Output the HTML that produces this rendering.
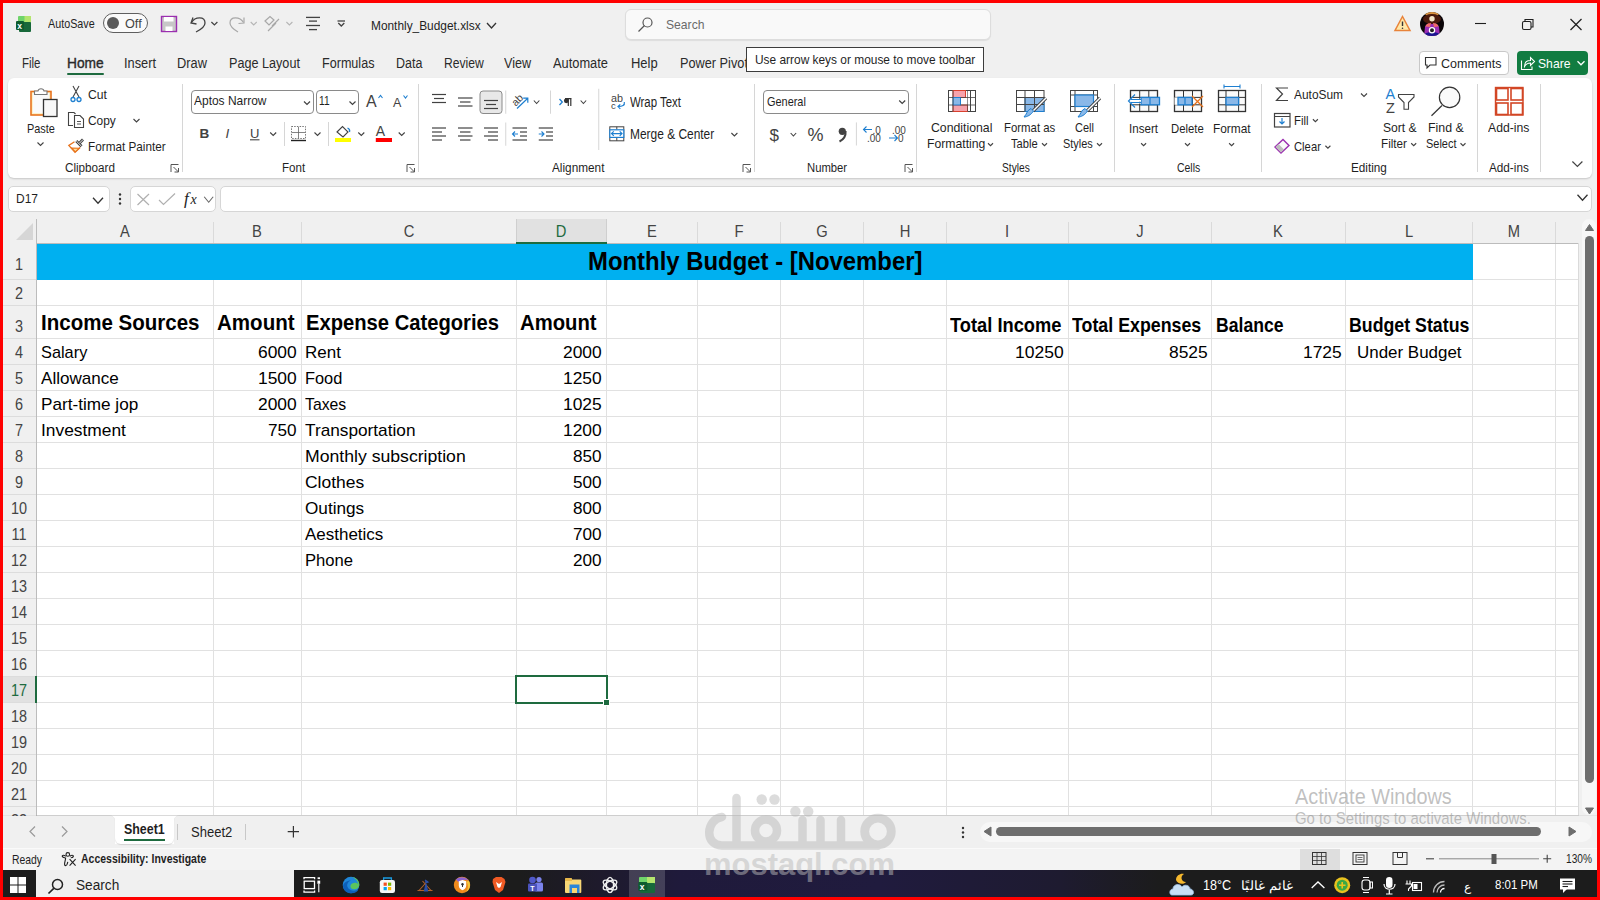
<!DOCTYPE html><html><head><meta charset="utf-8"><style>
*{margin:0;padding:0;box-sizing:border-box}
html,body{width:1600px;height:900px;overflow:hidden;background:#f0f0f0;font-family:"Liberation Sans",sans-serif}
.t{position:absolute;white-space:nowrap;line-height:1;transform-origin:0 0;z-index:11}
</style></head><body>
<div style="position:absolute;left:3px;top:219px;width:1575px;height:597px;background:#ffffff"></div>
<div style="position:absolute;left:3px;top:219px;width:1575px;height:24px;background:#f0f0f0"></div>
<div style="position:absolute;left:3px;top:243px;width:33px;height:573px;background:#f0f0f0"></div>
<svg style="position:absolute;left:16px;top:223px" width="17" height="17" viewBox="0 0 17 17" fill="none"><path d="M17 0 L17 17 L0 17 Z" fill="#d6d6d6"/></svg>
<div style="position:absolute;left:36px;top:244px;width:1437px;height:36px;background:#00b0f0"></div>
<div style="position:absolute;left:1473px;top:279px;width:105px;height:1px;background:#e1e1e1"></div>
<div style="position:absolute;left:3px;top:279px;width:33px;height:1px;background:#dcdcdc"></div>
<div style="position:absolute;left:36px;top:305px;width:1542px;height:1px;background:#e1e1e1"></div>
<div style="position:absolute;left:3px;top:305px;width:33px;height:1px;background:#dcdcdc"></div>
<div style="position:absolute;left:36px;top:338px;width:1542px;height:1px;background:#e1e1e1"></div>
<div style="position:absolute;left:3px;top:338px;width:33px;height:1px;background:#dcdcdc"></div>
<div style="position:absolute;left:36px;top:364px;width:1542px;height:1px;background:#e1e1e1"></div>
<div style="position:absolute;left:3px;top:364px;width:33px;height:1px;background:#dcdcdc"></div>
<div style="position:absolute;left:36px;top:390px;width:1542px;height:1px;background:#e1e1e1"></div>
<div style="position:absolute;left:3px;top:390px;width:33px;height:1px;background:#dcdcdc"></div>
<div style="position:absolute;left:36px;top:416px;width:1542px;height:1px;background:#e1e1e1"></div>
<div style="position:absolute;left:3px;top:416px;width:33px;height:1px;background:#dcdcdc"></div>
<div style="position:absolute;left:36px;top:442px;width:1542px;height:1px;background:#e1e1e1"></div>
<div style="position:absolute;left:3px;top:442px;width:33px;height:1px;background:#dcdcdc"></div>
<div style="position:absolute;left:36px;top:468px;width:1542px;height:1px;background:#e1e1e1"></div>
<div style="position:absolute;left:3px;top:468px;width:33px;height:1px;background:#dcdcdc"></div>
<div style="position:absolute;left:36px;top:494px;width:1542px;height:1px;background:#e1e1e1"></div>
<div style="position:absolute;left:3px;top:494px;width:33px;height:1px;background:#dcdcdc"></div>
<div style="position:absolute;left:36px;top:520px;width:1542px;height:1px;background:#e1e1e1"></div>
<div style="position:absolute;left:3px;top:520px;width:33px;height:1px;background:#dcdcdc"></div>
<div style="position:absolute;left:36px;top:546px;width:1542px;height:1px;background:#e1e1e1"></div>
<div style="position:absolute;left:3px;top:546px;width:33px;height:1px;background:#dcdcdc"></div>
<div style="position:absolute;left:36px;top:572px;width:1542px;height:1px;background:#e1e1e1"></div>
<div style="position:absolute;left:3px;top:572px;width:33px;height:1px;background:#dcdcdc"></div>
<div style="position:absolute;left:36px;top:598px;width:1542px;height:1px;background:#e1e1e1"></div>
<div style="position:absolute;left:3px;top:598px;width:33px;height:1px;background:#dcdcdc"></div>
<div style="position:absolute;left:36px;top:624px;width:1542px;height:1px;background:#e1e1e1"></div>
<div style="position:absolute;left:3px;top:624px;width:33px;height:1px;background:#dcdcdc"></div>
<div style="position:absolute;left:36px;top:650px;width:1542px;height:1px;background:#e1e1e1"></div>
<div style="position:absolute;left:3px;top:650px;width:33px;height:1px;background:#dcdcdc"></div>
<div style="position:absolute;left:36px;top:676px;width:1542px;height:1px;background:#e1e1e1"></div>
<div style="position:absolute;left:3px;top:676px;width:33px;height:1px;background:#dcdcdc"></div>
<div style="position:absolute;left:36px;top:702px;width:1542px;height:1px;background:#e1e1e1"></div>
<div style="position:absolute;left:3px;top:702px;width:33px;height:1px;background:#dcdcdc"></div>
<div style="position:absolute;left:36px;top:728px;width:1542px;height:1px;background:#e1e1e1"></div>
<div style="position:absolute;left:3px;top:728px;width:33px;height:1px;background:#dcdcdc"></div>
<div style="position:absolute;left:36px;top:754px;width:1542px;height:1px;background:#e1e1e1"></div>
<div style="position:absolute;left:3px;top:754px;width:33px;height:1px;background:#dcdcdc"></div>
<div style="position:absolute;left:36px;top:780px;width:1542px;height:1px;background:#e1e1e1"></div>
<div style="position:absolute;left:3px;top:780px;width:33px;height:1px;background:#dcdcdc"></div>
<div style="position:absolute;left:36px;top:806px;width:1542px;height:1px;background:#e1e1e1"></div>
<div style="position:absolute;left:3px;top:806px;width:33px;height:1px;background:#dcdcdc"></div>
<div style="position:absolute;left:213px;top:280px;width:1px;height:536px;background:#e1e1e1"></div>
<div style="position:absolute;left:213px;top:222px;width:1px;height:21px;background:#dadada"></div>
<div style="position:absolute;left:301px;top:280px;width:1px;height:536px;background:#e1e1e1"></div>
<div style="position:absolute;left:301px;top:222px;width:1px;height:21px;background:#dadada"></div>
<div style="position:absolute;left:516px;top:280px;width:1px;height:536px;background:#e1e1e1"></div>
<div style="position:absolute;left:516px;top:222px;width:1px;height:21px;background:#dadada"></div>
<div style="position:absolute;left:606px;top:280px;width:1px;height:536px;background:#e1e1e1"></div>
<div style="position:absolute;left:606px;top:222px;width:1px;height:21px;background:#dadada"></div>
<div style="position:absolute;left:697px;top:280px;width:1px;height:536px;background:#e1e1e1"></div>
<div style="position:absolute;left:697px;top:222px;width:1px;height:21px;background:#dadada"></div>
<div style="position:absolute;left:780px;top:280px;width:1px;height:536px;background:#e1e1e1"></div>
<div style="position:absolute;left:780px;top:222px;width:1px;height:21px;background:#dadada"></div>
<div style="position:absolute;left:863px;top:280px;width:1px;height:536px;background:#e1e1e1"></div>
<div style="position:absolute;left:863px;top:222px;width:1px;height:21px;background:#dadada"></div>
<div style="position:absolute;left:946px;top:280px;width:1px;height:536px;background:#e1e1e1"></div>
<div style="position:absolute;left:946px;top:222px;width:1px;height:21px;background:#dadada"></div>
<div style="position:absolute;left:1068px;top:280px;width:1px;height:536px;background:#e1e1e1"></div>
<div style="position:absolute;left:1068px;top:222px;width:1px;height:21px;background:#dadada"></div>
<div style="position:absolute;left:1211px;top:280px;width:1px;height:536px;background:#e1e1e1"></div>
<div style="position:absolute;left:1211px;top:222px;width:1px;height:21px;background:#dadada"></div>
<div style="position:absolute;left:1345px;top:280px;width:1px;height:536px;background:#e1e1e1"></div>
<div style="position:absolute;left:1345px;top:222px;width:1px;height:21px;background:#dadada"></div>
<div style="position:absolute;left:1472px;top:280px;width:1px;height:536px;background:#e1e1e1"></div>
<div style="position:absolute;left:1472px;top:222px;width:1px;height:21px;background:#dadada"></div>
<div style="position:absolute;left:1555px;top:244px;width:1px;height:572px;background:#e1e1e1"></div>
<div style="position:absolute;left:1555px;top:222px;width:1px;height:21px;background:#dadada"></div>
<div style="position:absolute;left:1578px;top:243px;width:1px;height:573px;background:#dadada"></div>
<div style="position:absolute;left:36px;top:815px;width:1543px;height:1px;background:#dadada"></div>
<div style="position:absolute;left:36px;top:243px;width:1542px;height:1px;background:#bcbcbc"></div>
<div style="position:absolute;left:36px;top:219px;width:1px;height:597px;background:#bcbcbc"></div>
<div style="position:absolute;left:516px;top:219px;width:91px;height:24px;background:#e1e1e1;border-left:1px solid #cfcfcf;border-right:1px solid #cfcfcf"></div>
<div style="position:absolute;left:516px;top:242px;width:91px;height:2px;background:#1e6b3f"></div>
<div style="position:absolute;left:3px;top:677px;width:33px;height:25px;background:#e1e1e1"></div>
<div style="position:absolute;left:35px;top:676px;width:2px;height:27px;background:#1e6b3f"></div>
<div class="t" style="left:84.5px;width:80px;text-align:center;top:223.66px;font-size:16px;color:#444444;transform:scaleX(0.92);transform-origin:50% 0">A</div>
<div class="t" style="left:217.0px;width:80px;text-align:center;top:223.66px;font-size:16px;color:#444444;transform:scaleX(0.92);transform-origin:50% 0">B</div>
<div class="t" style="left:368.5px;width:80px;text-align:center;top:223.66px;font-size:16px;color:#444444;transform:scaleX(0.92);transform-origin:50% 0">C</div>
<div class="t" style="left:521.0px;width:80px;text-align:center;top:223.66px;font-size:16px;color:#1e6b3f;transform:scaleX(0.92);transform-origin:50% 0">D</div>
<div class="t" style="left:611.5px;width:80px;text-align:center;top:223.66px;font-size:16px;color:#444444;transform:scaleX(0.92);transform-origin:50% 0">E</div>
<div class="t" style="left:698.5px;width:80px;text-align:center;top:223.66px;font-size:16px;color:#444444;transform:scaleX(0.92);transform-origin:50% 0">F</div>
<div class="t" style="left:781.5px;width:80px;text-align:center;top:223.66px;font-size:16px;color:#444444;transform:scaleX(0.92);transform-origin:50% 0">G</div>
<div class="t" style="left:864.5px;width:80px;text-align:center;top:223.66px;font-size:16px;color:#444444;transform:scaleX(0.92);transform-origin:50% 0">H</div>
<div class="t" style="left:967.0px;width:80px;text-align:center;top:223.66px;font-size:16px;color:#444444;transform:scaleX(0.92);transform-origin:50% 0">I</div>
<div class="t" style="left:1099.5px;width:80px;text-align:center;top:223.66px;font-size:16px;color:#444444;transform:scaleX(0.92);transform-origin:50% 0">J</div>
<div class="t" style="left:1238.0px;width:80px;text-align:center;top:223.66px;font-size:16px;color:#444444;transform:scaleX(0.92);transform-origin:50% 0">K</div>
<div class="t" style="left:1368.5px;width:80px;text-align:center;top:223.66px;font-size:16px;color:#444444;transform:scaleX(0.92);transform-origin:50% 0">L</div>
<div class="t" style="left:1473.5px;width:80px;text-align:center;top:223.66px;font-size:16px;color:#444444;transform:scaleX(0.92);transform-origin:50% 0">M</div>
<div class="t" style="left:1.5px;width:34px;text-align:center;top:256.44px;font-size:17.2px;color:#444444;transform:scaleX(0.84);transform-origin:50% 0">1</div>
<div class="t" style="left:1.5px;width:34px;text-align:center;top:284.84px;font-size:17.2px;color:#444444;transform:scaleX(0.84);transform-origin:50% 0">2</div>
<div class="t" style="left:1.5px;width:34px;text-align:center;top:317.84px;font-size:17.2px;color:#444444;transform:scaleX(0.84);transform-origin:50% 0">3</div>
<div class="t" style="left:1.5px;width:34px;text-align:center;top:343.84px;font-size:17.2px;color:#444444;transform:scaleX(0.84);transform-origin:50% 0">4</div>
<div class="t" style="left:1.5px;width:34px;text-align:center;top:369.84px;font-size:17.2px;color:#444444;transform:scaleX(0.84);transform-origin:50% 0">5</div>
<div class="t" style="left:1.5px;width:34px;text-align:center;top:395.84px;font-size:17.2px;color:#444444;transform:scaleX(0.84);transform-origin:50% 0">6</div>
<div class="t" style="left:1.5px;width:34px;text-align:center;top:421.84px;font-size:17.2px;color:#444444;transform:scaleX(0.84);transform-origin:50% 0">7</div>
<div class="t" style="left:1.5px;width:34px;text-align:center;top:447.84px;font-size:17.2px;color:#444444;transform:scaleX(0.84);transform-origin:50% 0">8</div>
<div class="t" style="left:1.5px;width:34px;text-align:center;top:473.84px;font-size:17.2px;color:#444444;transform:scaleX(0.84);transform-origin:50% 0">9</div>
<div class="t" style="left:1.5px;width:34px;text-align:center;top:499.84px;font-size:17.2px;color:#444444;transform:scaleX(0.84);transform-origin:50% 0">10</div>
<div class="t" style="left:1.5px;width:34px;text-align:center;top:525.84px;font-size:17.2px;color:#444444;transform:scaleX(0.84);transform-origin:50% 0">11</div>
<div class="t" style="left:1.5px;width:34px;text-align:center;top:551.84px;font-size:17.2px;color:#444444;transform:scaleX(0.84);transform-origin:50% 0">12</div>
<div class="t" style="left:1.5px;width:34px;text-align:center;top:577.84px;font-size:17.2px;color:#444444;transform:scaleX(0.84);transform-origin:50% 0">13</div>
<div class="t" style="left:1.5px;width:34px;text-align:center;top:603.84px;font-size:17.2px;color:#444444;transform:scaleX(0.84);transform-origin:50% 0">14</div>
<div class="t" style="left:1.5px;width:34px;text-align:center;top:629.84px;font-size:17.2px;color:#444444;transform:scaleX(0.84);transform-origin:50% 0">15</div>
<div class="t" style="left:1.5px;width:34px;text-align:center;top:655.84px;font-size:17.2px;color:#444444;transform:scaleX(0.84);transform-origin:50% 0">16</div>
<div class="t" style="left:1.5px;width:34px;text-align:center;top:681.84px;font-size:17.2px;color:#1e6b3f;transform:scaleX(0.84);transform-origin:50% 0">17</div>
<div class="t" style="left:1.5px;width:34px;text-align:center;top:707.84px;font-size:17.2px;color:#444444;transform:scaleX(0.84);transform-origin:50% 0">18</div>
<div class="t" style="left:1.5px;width:34px;text-align:center;top:733.84px;font-size:17.2px;color:#444444;transform:scaleX(0.84);transform-origin:50% 0">19</div>
<div class="t" style="left:1.5px;width:34px;text-align:center;top:759.84px;font-size:17.2px;color:#444444;transform:scaleX(0.84);transform-origin:50% 0">20</div>
<div class="t" style="left:1.5px;width:34px;text-align:center;top:785.84px;font-size:17.2px;color:#444444;transform:scaleX(0.84);transform-origin:50% 0">21</div>
<div style="position:absolute;left:0;top:806px;width:36px;height:10px;overflow:hidden;z-index:11"><div class="t" style="left:1.5px;width:34px;text-align:center;top:5.84px;font-size:17.2px;color:#444444;transform:scaleX(0.84);transform-origin:50% 0">22</div></div>
<div style="position:absolute;left:515px;top:675px;width:93px;height:29px;border:2px solid #1e6b3f;background:transparent"></div>
<div style="position:absolute;left:603px;top:699px;width:7px;height:7px;background:#1e6b3f;border:1px solid #fff"></div>
<div class="t" style="left:587.50px;top:249.16px;font-size:25.80px;color:#000;transform:scaleX(0.9262); font-weight:bold;">Monthly Budget - [November]</div>
<div class="t" style="left:41.00px;top:312.11px;font-size:22.32px;color:#000;transform:scaleX(0.9193); font-weight:bold;">Income Sources</div>
<div class="t" style="left:216.70px;top:312.11px;font-size:22.32px;color:#000;transform:scaleX(0.9210); font-weight:bold;">Amount</div>
<div class="t" style="left:305.60px;top:312.11px;font-size:22.32px;color:#000;transform:scaleX(0.9050); font-weight:bold;">Expense Categories</div>
<div class="t" style="left:520.40px;top:312.11px;font-size:22.32px;color:#000;transform:scaleX(0.9080); font-weight:bold;">Amount</div>
<div class="t" style="left:950.00px;top:313.61px;font-size:21.01px;color:#000;transform:scaleX(0.8712); font-weight:bold;">Total Income</div>
<div class="t" style="left:1072.30px;top:313.61px;font-size:21.01px;color:#000;transform:scaleX(0.8475); font-weight:bold;">Total Expenses</div>
<div class="t" style="left:1216.00px;top:313.61px;font-size:21.01px;color:#000;transform:scaleX(0.8377); font-weight:bold;">Balance</div>
<div class="t" style="left:1349.40px;top:313.61px;font-size:21.01px;color:#000;transform:scaleX(0.8457); font-weight:bold;">Budget Status</div>
<div class="t" style="left:40.60px;top:343.89px;font-size:16.38px;color:#000;transform:scaleX(0.9990);">Salary</div>
<div class="t" style="left:40.60px;top:369.89px;font-size:16.38px;color:#000;transform:scaleX(1.0431);">Allowance</div>
<div class="t" style="left:40.60px;top:395.89px;font-size:16.38px;color:#000;transform:scaleX(1.0489);">Part-time jop</div>
<div class="t" style="left:40.60px;top:421.89px;font-size:16.38px;color:#000;transform:scaleX(1.0614);">Investment</div>
<div class="t" style="left:258.30px;top:343.89px;font-size:16.38px;color:#000;transform:scaleX(1.0645);">6000</div>
<div class="t" style="left:258.30px;top:369.89px;font-size:16.38px;color:#000;transform:scaleX(1.0645);">1500</div>
<div class="t" style="left:258.30px;top:395.89px;font-size:16.38px;color:#000;transform:scaleX(1.0645);">2000</div>
<div class="t" style="left:268.35px;top:421.89px;font-size:16.38px;color:#000;transform:scaleX(1.0476);">750</div>
<div class="t" style="left:304.90px;top:343.89px;font-size:16.38px;color:#000;transform:scaleX(1.0389);">Rent</div>
<div class="t" style="left:304.90px;top:369.89px;font-size:16.38px;color:#000;transform:scaleX(1.0016);">Food</div>
<div class="t" style="left:304.90px;top:395.89px;font-size:16.38px;color:#000;transform:scaleX(0.9639);">Taxes</div>
<div class="t" style="left:304.90px;top:421.89px;font-size:16.38px;color:#000;transform:scaleX(1.0536);">Transportation</div>
<div class="t" style="left:304.90px;top:447.89px;font-size:16.38px;color:#000;transform:scaleX(1.0778);">Monthly subscription</div>
<div class="t" style="left:304.90px;top:473.89px;font-size:16.38px;color:#000;transform:scaleX(1.0681);">Clothes</div>
<div class="t" style="left:304.90px;top:499.89px;font-size:16.38px;color:#000;transform:scaleX(1.0496);">Outings</div>
<div class="t" style="left:304.90px;top:525.89px;font-size:16.38px;color:#000;transform:scaleX(1.0371);">Aesthetics</div>
<div class="t" style="left:304.90px;top:551.89px;font-size:16.38px;color:#000;transform:scaleX(1.0163);">Phone</div>
<div class="t" style="left:563.30px;top:343.89px;font-size:16.38px;color:#000;transform:scaleX(1.0645);">2000</div>
<div class="t" style="left:563.30px;top:369.89px;font-size:16.38px;color:#000;transform:scaleX(1.0645);">1250</div>
<div class="t" style="left:563.30px;top:395.89px;font-size:16.38px;color:#000;transform:scaleX(1.0645);">1025</div>
<div class="t" style="left:563.30px;top:421.89px;font-size:16.38px;color:#000;transform:scaleX(1.0645);">1200</div>
<div class="t" style="left:573.35px;top:447.89px;font-size:16.38px;color:#000;transform:scaleX(1.0476);">850</div>
<div class="t" style="left:573.35px;top:473.89px;font-size:16.38px;color:#000;transform:scaleX(1.0476);">500</div>
<div class="t" style="left:573.35px;top:499.89px;font-size:16.38px;color:#000;transform:scaleX(1.0476);">800</div>
<div class="t" style="left:573.35px;top:525.89px;font-size:16.38px;color:#000;transform:scaleX(1.0476);">700</div>
<div class="t" style="left:573.35px;top:551.89px;font-size:16.38px;color:#000;transform:scaleX(1.0476);">200</div>
<div class="t" style="left:1015.45px;top:344.14px;font-size:16.38px;color:#000;transform:scaleX(1.0708);">10250</div>
<div class="t" style="left:1168.90px;top:344.14px;font-size:16.38px;color:#000;transform:scaleX(1.0645);">8525</div>
<div class="t" style="left:1302.90px;top:344.14px;font-size:16.38px;color:#000;transform:scaleX(1.0645);">1725</div>
<div class="t" style="left:1356.80px;top:344.14px;font-size:16.38px;color:#000;transform:scaleX(1.0352);">Under Budget</div>
<div class="t" style="left:48.25px;top:18.28px;font-size:12.90px;color:#1f1f1f;transform:scaleX(0.8351);">AutoSave</div>
<div style="position:absolute;left:103px;top:13px;width:45px;height:20px;border:1px solid #5f5f5f;border-radius:10px;background:#fafafa"></div>
<div style="position:absolute;left:107px;top:17px;width:12px;height:12px;border-radius:6px;background:#5a5a5a"></div>
<div class="t" style="left:125.00px;top:18.28px;font-size:12.90px;color:#444;transform:scaleX(0.9838);">Off</div>
<div class="t" style="left:371.25px;top:18.76px;font-size:13.04px;color:#1f1f1f;transform:scaleX(0.9116);">Monthly_Budget.xlsx</div>
<svg style="position:absolute;left:486.0px;top:21.5px" width="11" height="7" viewBox="0 0 11 7" fill="none"><path d="M1 1 L5.5 6 L10 1" stroke="#333" stroke-width="1.3" fill="none"/></svg>
<div style="position:absolute;left:625px;top:9px;width:366px;height:31px;background:#f9f9f9;border:1px solid #dddddd;border-radius:6px;box-shadow:0 1px 1px rgba(0,0,0,0.08)"></div>
<div class="t" style="left:666.00px;top:18.39px;font-size:13.48px;color:#6a6a6a;transform:scaleX(0.9011);">Search</div>
<div class="t" style="left:22.00px;top:57.02px;font-size:13.91px;color:#2a2a2a;transform:scaleX(0.8259);">File</div>
<div class="t" style="left:67.00px;top:57.02px;font-size:13.91px;color:#2a2a2a;transform:scaleX(0.9893);-webkit-text-stroke:0.35px #2a2a2a;">Home</div>
<div class="t" style="left:124.00px;top:57.02px;font-size:13.91px;color:#2a2a2a;transform:scaleX(0.9200);">Insert</div>
<div class="t" style="left:177.00px;top:57.02px;font-size:13.91px;color:#2a2a2a;transform:scaleX(0.9215);">Draw</div>
<div class="t" style="left:229.00px;top:57.02px;font-size:13.91px;color:#2a2a2a;transform:scaleX(0.9080);">Page Layout</div>
<div class="t" style="left:322.00px;top:57.02px;font-size:13.91px;color:#2a2a2a;transform:scaleX(0.9049);">Formulas</div>
<div class="t" style="left:396.00px;top:57.02px;font-size:13.91px;color:#2a2a2a;transform:scaleX(0.8984);">Data</div>
<div class="t" style="left:444.00px;top:57.02px;font-size:13.91px;color:#2a2a2a;transform:scaleX(0.8739);">Review</div>
<div class="t" style="left:503.75px;top:57.02px;font-size:13.91px;color:#2a2a2a;transform:scaleX(0.9068);">View</div>
<div class="t" style="left:553.00px;top:57.02px;font-size:13.91px;color:#2a2a2a;transform:scaleX(0.9236);">Automate</div>
<div class="t" style="left:630.75px;top:57.02px;font-size:13.91px;color:#2a2a2a;transform:scaleX(0.9333);">Help</div>
<div class="t" style="left:680.00px;top:57.02px;font-size:13.91px;color:#2a2a2a;transform:scaleX(0.9153);">Power Pivot</div>
<div style="position:absolute;left:67px;top:73px;width:37px;height:2px;background:#1e6b3f;border-radius:1px"></div>
<div style="position:absolute;left:746px;top:47px;width:238px;height:25px;background:#ffffff;border:1px solid #3c3c3c;z-index:12"></div>
<div class="t" style="left:754.50px;top:53.09px;font-size:13.48px;color:#1f1f1f;transform:scaleX(0.8838);z-index:13;">Use arrow keys or mouse to move toolbar</div>
<div style="position:absolute;left:1419px;top:51px;width:90px;height:24px;background:#fff;border:1px solid #c8c8c8;border-radius:4px"></div>
<div class="t" style="left:1440.50px;top:56.59px;font-size:13.48px;color:#1f1f1f;transform:scaleX(0.9293);">Comments</div>
<div style="position:absolute;left:1517px;top:51px;width:71px;height:24px;background:#117c41;border-radius:4px"></div>
<div class="t" style="left:1538.00px;top:56.59px;font-size:13.48px;color:#ffffff;transform:scaleX(0.9031);">Share</div>
<div style="position:absolute;left:8px;top:78px;width:1584px;height:100px;background:#ffffff;border-radius:6px;box-shadow:0 1px 2px rgba(0,0,0,0.18)"></div>
<div style="position:absolute;left:8px;top:186px;width:102px;height:26px;background:#fff;border:1px solid #d6d6d6;border-radius:5px"></div>
<div class="t" style="left:15.50px;top:192.34px;font-size:13.48px;color:#1f1f1f;transform:scaleX(0.8919);">D17</div>
<div style="position:absolute;left:130px;top:186px;width:86px;height:26px;background:#fff;border:1px solid #d6d6d6;border-radius:5px"></div>
<div style="position:absolute;left:220px;top:186px;width:1372px;height:26px;background:#fff;border:1px solid #d6d6d6;border-radius:5px"></div>
<div style="position:absolute;left:3px;top:816px;width:1594px;height:32px;background:#ffffff"></div>
<div style="position:absolute;left:3px;top:816px;width:112px;height:32px;background:#f0f0f0;border-radius:0 5px 0 0;box-shadow:0 -0.5px 0.5px rgba(0,0,0,0.10)"></div>
<div style="position:absolute;left:174px;top:816px;width:1423px;height:32px;background:#f0f0f0;border-radius:5px 0 0 0;box-shadow:0 -0.5px 0.5px rgba(0,0,0,0.10)"></div>
<div style="position:absolute;left:115px;top:844px;width:59px;height:4px;background:#f0f0f0"></div>
<div style="position:absolute;left:115px;top:816px;width:59px;height:28px;background:#ffffff;border-radius:0 0 6px 6px;box-shadow:0 1px 1px rgba(0,0,0,0.12)"></div>
<div class="t" style="left:124.25px;top:821.86px;font-size:14.93px;color:#1f1f1f;transform:scaleX(0.8323); font-weight:bold;">Sheet1</div>
<div style="position:absolute;left:124px;top:839px;width:41px;height:2px;background:#1e6b3f"></div>
<div style="position:absolute;left:177px;top:824px;width:1px;height:16px;background:#c8c8c8"></div>
<div class="t" style="left:190.50px;top:824.86px;font-size:14.93px;color:#1f1f1f;transform:scaleX(0.8717);">Sheet2</div>
<div style="position:absolute;left:245px;top:824px;width:1px;height:16px;background:#c8c8c8"></div>
<div style="position:absolute;left:3px;top:848px;width:1594px;height:22px;background:#f3f3f3;border-top:1px solid #fafafa"></div>
<div class="t" style="left:11.75px;top:853.82px;font-size:12.32px;color:#1f1f1f;transform:scaleX(0.8427);">Ready</div>
<div class="t" style="left:80.50px;top:852.58px;font-size:12.61px;color:#1f1f1f;transform:scaleX(0.8313); font-weight:bold;">Accessibility: Investigate</div>
<div class="t" style="left:1566.00px;top:852.89px;font-size:12.17px;color:#1f1f1f;transform:scaleX(0.8343);">130%</div>
<div style="position:absolute;left:1300px;top:849px;width:40px;height:21px;background:#dedede"></div>
<div style="position:absolute;left:980px;top:822px;width:612px;height:20px;background:#f7f7f7;border-radius:10px"></div>
<div style="position:absolute;left:996px;top:827px;width:545px;height:9px;background:#6e6e6e;border-radius:5px"></div>
<div style="position:absolute;left:1582px;top:219px;width:14px;height:596px;background:#f7f7f7;border-radius:7px"></div>
<div style="position:absolute;left:1585px;top:236px;width:9px;height:547px;background:#6e6e6e;border-radius:5px"></div>
<div style="position:absolute;left:0px;top:870px;width:1600px;height:30px;background:linear-gradient(90deg,#1c1c1c 0px,#1c1c1c 520px,#1e1a2c 600px,#1f1a3b 680px,#201b3e 880px,#1e1b30 1060px,#1c1c1c 1160px,#1c1c1c 1600px)"></div>
<div style="position:absolute;left:36px;top:870px;width:258px;height:27px;background:#f0f0f0"></div>
<div class="t" style="left:76.25px;top:878.18px;font-size:14.86px;color:#1f1f1f;transform:scaleX(0.9184);">Search</div>
<div style="position:absolute;left:629px;top:870px;width:36px;height:27px;background:rgba(255,255,255,0.17)"></div>
<div class="t" style="left:1203.40px;top:877.89px;font-size:14.78px;color:#ffffff;transform:scaleX(0.8524);">18°C</div>
<div class="t" style="left:1494.50px;top:878.09px;font-size:13.48px;color:#ffffff;transform:scaleX(0.8516);">8:01 PM</div>
<svg style="position:absolute;left:0;top:0;z-index:10" width="1600" height="900" viewBox="0 0 1600 900"><rect x="18" y="16" width="13" height="7" rx="1" fill="#6fd46b"/><rect x="24.5" y="16" width="6.5" height="6" fill="#b4e56e"/><rect x="19" y="22" width="12" height="10" rx="1" fill="#17683a"/><rect x="16" y="21" width="8" height="9" rx="1" fill="#0e5c2f"/><text x="17.3" y="28.6" font-family="Liberation Sans" font-size="8.5" fill="#ffffff" font-weight="bold" text-anchor="start" >x</text><rect x="161.5" y="16.5" width="15" height="15" rx="0" stroke="#9b2fb0" stroke-width="1.4" fill="#c7c7c7"/><rect x="164" y="17" width="9.5" height="4.5" rx="0" stroke="none" stroke-width="0" fill="#ffffff"/><rect x="165.5" y="26.5" width="7" height="4.5" rx="0" stroke="none" stroke-width="0" fill="#ffffff"/><path d="M193 17.5 L191 23 L196.5 24" stroke="#424242" stroke-width="1.3" fill="none" /><path d="M191.5 22.5 C195 16.5 205 16 205 23 C205 26 202 29 196 32" stroke="#424242" stroke-width="1.3" fill="none" /><path d="M211.4 22.0 L214.4 25.0 L217.4 22.0" stroke="#424242" stroke-width="1.2" fill="none"/><path d="M244 17.5 L244 23 L238.5 23.5" stroke="#a8a8a8" stroke-width="1.2" fill="none" /><path d="M243.5 22.5 C240 16.5 230 16 230 23 C230 26 233 29 238 32" stroke="#a8a8a8" stroke-width="1.2" fill="none" /><path d="M250.7 22.0 L253.7 25.0 L256.7 22.0" stroke="#b5b5b5" stroke-width="1.1" fill="none"/><path d="M265 21 L270 16.5 L274 20 L269 25 Z" stroke="#a8a8a8" stroke-width="1.2" fill="none" /><path d="M272 26 L279 19 M268 31 L276 23" stroke="#a8a8a8" stroke-width="1.2" fill="none" /><path d="M286.4 22.0 L289.4 25.0 L292.4 22.0" stroke="#b5b5b5" stroke-width="1.1" fill="none"/><line x1="306" y1="17.4" x2="320" y2="17.4" stroke="#424242" stroke-width="1.3"/><line x1="309" y1="21.1" x2="317" y2="21.1" stroke="#424242" stroke-width="1.3"/><line x1="306" y1="25.5" x2="320" y2="25.5" stroke="#424242" stroke-width="1.3"/><line x1="309" y1="29.6" x2="317" y2="29.6" stroke="#424242" stroke-width="1.3"/><line x1="337.5" y1="21" x2="345" y2="21" stroke="#424242" stroke-width="1.3"/><path d="M338.3 23.0 L341.3 26.0 L344.3 23.0" stroke="#424242" stroke-width="1.3" fill="none"/><circle cx="647.5" cy="22.5" r="4.5" stroke="#555" stroke-width="1.2" fill="none"/><line x1="644.5" y1="25.5" x2="638.5" y2="31.5" stroke="#555" stroke-width="1.3"/><path d="M1402.5 16.5 L1410 30.5 L1395 30.5 Z" stroke="#e8833a" stroke-width="1.5" fill="#ffe8a8" /><line x1="1402.5" y1="21.5" x2="1402.5" y2="26" stroke="#333" stroke-width="1.4"/><circle cx="1402.5" cy="28.2" r="0.8" fill="#333"/><defs><clipPath id="av"><circle cx="1432" cy="24" r="12"/></clipPath></defs><g clip-path="url(#av)"><rect x="1420" y="12" width="24" height="24" fill="#0a0508"/><ellipse cx="1432" cy="13.5" rx="7" ry="3.5" fill="#d9923e"/><ellipse cx="1432" cy="19" rx="9" ry="5" fill="#4a1a0c"/><path d="M1425 27 C1425 23 1439 23 1439 27 L1440 36 L1424 36 Z" fill="#9a2fb4"/><path d="M1425.5 26.5 C1426 23.5 1429 23 1431 23 L1430 27 Z M1438.5 26.5 C1438 23.5 1435 23 1433 23 L1434 27 Z" fill="#f06a6a"/><ellipse cx="1432" cy="35" rx="8" ry="3" fill="#1a1590"/><circle cx="1432" cy="18.7" r="2.7" fill="#f3e6c8"/><circle cx="1432" cy="30.3" r="2.6" stroke="#ffffff" stroke-width="1.2" fill="#222"/></g><line x1="1475" y1="23.5" x2="1486" y2="23.5" stroke="#1f1f1f" stroke-width="1.1"/><rect x="1522.5" y="21.5" width="8.5" height="8" rx="1.5" stroke="#1f1f1f" stroke-width="1.1" fill="none"/><path d="M1525 21.5 L1525 19.5 L1533 19.5 L1533 27 L1531 27" stroke="#1f1f1f" stroke-width="1.1" fill="none" /><line x1="1570.5" y1="19" x2="1581.5" y2="30" stroke="#1f1f1f" stroke-width="1.2"/><line x1="1581.5" y1="19" x2="1570.5" y2="30" stroke="#1f1f1f" stroke-width="1.2"/><path d="M1425.5 57.5 L1436 57.5 L1436 65 L1430 65 L1427 68 L1427 65 L1425.5 65 Z" stroke="#333" stroke-width="1.1" fill="none" /><path d="M1521.5 60.5 L1521.5 69.5 L1532 69.5 L1532 66.5" stroke="#fff" stroke-width="1.1" fill="none" /><path d="M1524.5 66.5 C1524.5 62 1527.5 60.5 1530.5 60.5 L1530.5 57.5 L1534.5 61.5 L1530.5 65.5 L1530.5 63 C1528 63 1526 64 1524.5 66.5 Z" stroke="#fff" stroke-width="1.1" fill="none" /><path d="M1577.5 61.25 L1581 64.75 L1584.5 61.25" stroke="#fff" stroke-width="1.3" fill="none"/><rect x="31" y="91.5" width="20" height="23.5" rx="0" stroke="#e8731d" stroke-width="1.6" fill="#fdf0c8"/><rect x="33" y="93" width="16" height="20" rx="0" stroke="none" stroke-width="0" fill="#fafafa"/><path d="M34.5 94.5 L34.5 91 L38 91 C38.5 88 43.5 88 44 91 L47 91 L47 94.5 Z" stroke="#777" stroke-width="1.1" fill="#ffffff" /><rect x="43.5" y="99.5" width="13.5" height="17" rx="0" stroke="#333" stroke-width="1.3" fill="#f7f7f7"/><path d="M37.5 142.5 L40.5 145.5 L43.5 142.5" stroke="#424242" stroke-width="1.1" fill="none"/><path d="M73 86 L79 97 M79 86 L73 97" stroke="#424242" stroke-width="1.1" fill="none" /><circle cx="73" cy="99.5" r="2" stroke="#1f80d0" stroke-width="1.3" fill="none"/><circle cx="79" cy="99.5" r="2" stroke="#1f80d0" stroke-width="1.3" fill="none"/><path d="M73 125.5 L68.5 125.5 L68.5 112.5 L74 112.5 L75.5 114" stroke="#424242" stroke-width="1.1" fill="none" /><path d="M74.5 115.5 L80 115.5 L83.5 119 L83.5 127.5 L74.5 127.5 Z" stroke="#424242" stroke-width="1.1" fill="#fff" /><line x1="77" y1="121.5" x2="81" y2="121.5" stroke="#424242" stroke-width="0.9"/><line x1="77" y1="124" x2="81" y2="124" stroke="#424242" stroke-width="0.9"/><path d="M133.5 119.0 L136.5 122.0 L139.5 119.0" stroke="#424242" stroke-width="1.1" fill="none"/><path d="M74.5 141.8 L68.8 145.5 L75 152.3 L80.2 147.5" stroke="#e8731d" stroke-width="1.3" fill="#ffffff" /><path d="M71.5 148 L79 148.3 L75.3 151.8 Z" stroke="#e8731d" stroke-width="1.1" fill="#fde39a" /><path d="M76.3 141 L81.5 146.2" stroke="#424242" stroke-width="2.8" fill="none" /><path d="M76.3 141 L81.5 146.2" stroke="#fff" stroke-width="0.9" fill="none" /><path d="M79.3 143.3 L83 139.6" stroke="#424242" stroke-width="2.8" fill="none" /><path d="M79.3 143.3 L83 139.6" stroke="#fff" stroke-width="0.9" fill="none" /><path d="M171 172.0 L171 164.5 L178.5 164.5 M173.5 167.0 L178.5 172.0 M178.5 168.0 L178.5 172.0 L174.5 172.0" stroke="#555" stroke-width="1" fill="none" /><path d="M407 172.0 L407 164.5 L414.5 164.5 M409.5 167.0 L414.5 172.0 M414.5 168.0 L414.5 172.0 L410.5 172.0" stroke="#555" stroke-width="1" fill="none" /><path d="M743 172.0 L743 164.5 L750.5 164.5 M745.5 167.0 L750.5 172.0 M750.5 168.0 L750.5 172.0 L746.5 172.0" stroke="#555" stroke-width="1" fill="none" /><path d="M905 172.0 L905 164.5 L912.5 164.5 M907.5 167.0 L912.5 172.0 M912.5 168.0 L912.5 172.0 L908.5 172.0" stroke="#555" stroke-width="1" fill="none" /><line x1="182.5" y1="84" x2="182.5" y2="172" stroke="#d6d6d6" stroke-width="1"/><line x1="418.5" y1="84" x2="418.5" y2="172" stroke="#d6d6d6" stroke-width="1"/><line x1="754.5" y1="84" x2="754.5" y2="172" stroke="#d6d6d6" stroke-width="1"/><line x1="916.5" y1="84" x2="916.5" y2="172" stroke="#d6d6d6" stroke-width="1"/><line x1="1114.5" y1="84" x2="1114.5" y2="172" stroke="#d6d6d6" stroke-width="1"/><line x1="1261.5" y1="84" x2="1261.5" y2="172" stroke="#d6d6d6" stroke-width="1"/><line x1="1477.5" y1="84" x2="1477.5" y2="172" stroke="#d6d6d6" stroke-width="1"/><line x1="1540.5" y1="84" x2="1540.5" y2="172" stroke="#d6d6d6" stroke-width="1"/><rect x="191.5" y="90.5" width="122" height="23" rx="3.5" stroke="#8a8a8a" stroke-width="1" fill="#fff"/><rect x="316.5" y="90.5" width="42" height="23" rx="3.5" stroke="#8a8a8a" stroke-width="1" fill="#fff"/><path d="M304.0 101.5 L307 104.5 L310.0 101.5" stroke="#424242" stroke-width="1.2" fill="none"/><path d="M349.5 101.5 L352.5 104.5 L355.5 101.5" stroke="#424242" stroke-width="1.2" fill="none"/><text x="366" y="106.7" font-family="Liberation Sans" font-size="16" fill="#424242" font-weight="normal" text-anchor="start" >A</text><path d="M378.5 98 L380.5 95.5 L382.5 98" stroke="#1e7fd0" stroke-width="1.1" fill="none" /><text x="393" y="106.7" font-family="Liberation Sans" font-size="12.5" fill="#424242" font-weight="normal" text-anchor="start" >A</text><path d="M403.5 95.5 L405.5 98 L407.5 95.5" stroke="#1e7fd0" stroke-width="1.1" fill="none" /><text x="199.5" y="137.9" font-family="Liberation Sans" font-size="13.5" fill="#424242" font-weight="bold" text-anchor="start" >B</text><text x="225.5" y="137.9" font-family="Liberation Sans" font-size="13.5" fill="#424242" font-weight="normal" text-anchor="start" font-style="italic">I</text><text x="250" y="137.5" font-family="Liberation Sans" font-size="13" fill="#424242" font-weight="normal" text-anchor="start" >U</text><line x1="250" y1="139.8" x2="259.5" y2="139.8" stroke="#424242" stroke-width="1.1"/><path d="M270.2 132.5 L273.2 135.5 L276.2 132.5" stroke="#424242" stroke-width="1.1" fill="none"/><line x1="284.5" y1="122" x2="284.5" y2="146" stroke="#d6d6d6" stroke-width="1"/><rect x="291.5" y="126.5" width="14" height="12" rx="0" stroke-dasharray="1.5 1.2" stroke="#666" stroke-width="0.9" fill="none"/><line x1="298.5" y1="127" x2="298.5" y2="138" stroke="#666" stroke-width="0.8"/><line x1="292" y1="132.5" x2="305" y2="132.5" stroke="#666" stroke-width="0.8"/><line x1="291" y1="140.5" x2="306" y2="140.5" stroke="#222" stroke-width="1.4"/><path d="M314.5 132.5 L317.5 135.5 L320.5 132.5" stroke="#424242" stroke-width="1.1" fill="none"/><line x1="328.5" y1="122" x2="328.5" y2="146" stroke="#d6d6d6" stroke-width="1"/><path d="M337 132 L342.5 126.5 L348 132 L343 137 Z" stroke="#424242" stroke-width="1.1" fill="#fff" /><path d="M347.5 128 C349 128.5 350 130 349.5 132" stroke="#1f80d0" stroke-width="1.3" fill="none" /><rect x="335" y="138" width="16" height="4" rx="0" stroke="none" stroke-width="0" fill="#ffff00"/><path d="M358.3 132.5 L361.3 135.5 L364.3 132.5" stroke="#424242" stroke-width="1.1" fill="none"/><text x="375.8" y="136.4" font-family="Liberation Sans" font-size="14" fill="#424242" font-weight="normal" text-anchor="start" >A</text><rect x="375.8" y="138" width="16.2" height="4" rx="0" stroke="none" stroke-width="0" fill="#ff0000"/><path d="M398.7 132.5 L401.7 135.5 L404.7 132.5" stroke="#424242" stroke-width="1.1" fill="none"/><line x1="432" y1="94.5" x2="446" y2="94.5" stroke="#424242" stroke-width="1.2"/><line x1="434" y1="98.5" x2="444" y2="98.5" stroke="#424242" stroke-width="1.2"/><line x1="432" y1="102.5" x2="446" y2="102.5" stroke="#424242" stroke-width="1.2"/><line x1="458" y1="98" x2="472.5" y2="98" stroke="#424242" stroke-width="1.2"/><line x1="460" y1="102" x2="470.5" y2="102" stroke="#424242" stroke-width="1.2"/><line x1="458" y1="106" x2="472.5" y2="106" stroke="#424242" stroke-width="1.2"/><rect x="480" y="91" width="22" height="22.5" rx="3" stroke="#8a8a8a" stroke-width="1" fill="#e8e8e8"/><line x1="484" y1="100.5" x2="498" y2="100.5" stroke="#424242" stroke-width="1.2"/><line x1="486" y1="104.5" x2="496" y2="104.5" stroke="#424242" stroke-width="1.2"/><line x1="484" y1="108.5" x2="498" y2="108.5" stroke="#424242" stroke-width="1.2"/><line x1="505.75" y1="90.5" x2="505.75" y2="113.75" stroke="#d6d6d6" stroke-width="1"/><text x="511" y="104.5" font-family="Liberation Sans" font-size="10.5" fill="#424242" font-weight="normal" text-anchor="start" transform="rotate(-45 516 100)">ab</text><path d="M517 108.5 L527.8 98.2 M523.2 98.2 L527.8 98.2 L527.8 102.8" stroke="#1e7fd0" stroke-width="1.2" fill="none" /><path d="M533.85 100.5 L536.6 103.5 L539.35 100.5" stroke="#424242" stroke-width="1.1" fill="none"/><line x1="550.5" y1="90.5" x2="550.5" y2="113.75" stroke="#d6d6d6" stroke-width="1"/><path d="M559.5 99 L562.3 102 L559.5 105" stroke="#1e7fd0" stroke-width="1.3" fill="none" /><circle cx="566.3" cy="100.8" r="2.4" fill="#333"/><path d="M565 98.6 L571.5 98.6 M568.3 98.6 L568.3 106 M570.8 98.6 L570.8 106" stroke="#333" stroke-width="1.2" fill="none" /><path d="M580.65 100.5 L583.4 103.5 L586.15 100.5" stroke="#424242" stroke-width="1.1" fill="none"/><line x1="598.75" y1="88.75" x2="598.75" y2="150" stroke="#d6d6d6" stroke-width="1"/><line x1="432" y1="128" x2="446" y2="128" stroke="#424242" stroke-width="1.2"/><line x1="432" y1="132" x2="442" y2="132" stroke="#424242" stroke-width="1.2"/><line x1="432" y1="136" x2="446" y2="136" stroke="#424242" stroke-width="1.2"/><line x1="432" y1="140" x2="442" y2="140" stroke="#424242" stroke-width="1.2"/><line x1="458" y1="128" x2="472.5" y2="128" stroke="#424242" stroke-width="1.2"/><line x1="460" y1="132" x2="470.5" y2="132" stroke="#424242" stroke-width="1.2"/><line x1="458" y1="136" x2="472.5" y2="136" stroke="#424242" stroke-width="1.2"/><line x1="460" y1="140" x2="470.5" y2="140" stroke="#424242" stroke-width="1.2"/><line x1="484" y1="128" x2="498" y2="128" stroke="#424242" stroke-width="1.2"/><line x1="488" y1="132" x2="498" y2="132" stroke="#424242" stroke-width="1.2"/><line x1="484" y1="136" x2="498" y2="136" stroke="#424242" stroke-width="1.2"/><line x1="488" y1="140" x2="498" y2="140" stroke="#424242" stroke-width="1.2"/><line x1="505.75" y1="122.5" x2="505.75" y2="145.75" stroke="#d6d6d6" stroke-width="1"/><line x1="512.5" y1="128" x2="527" y2="128" stroke="#424242" stroke-width="1.2"/><line x1="512.5" y1="140" x2="527" y2="140" stroke="#424242" stroke-width="1.2"/><line x1="520" y1="132" x2="527" y2="132" stroke="#424242" stroke-width="1.2"/><line x1="520" y1="136" x2="527" y2="136" stroke="#424242" stroke-width="1.2"/><path d="M518 134 L512.5 134 M515 131.5 L512.5 134 L515 136.5" stroke="#1e7fd0" stroke-width="1.1" fill="none" /><line x1="538.75" y1="128" x2="553" y2="128" stroke="#424242" stroke-width="1.2"/><line x1="538.75" y1="140" x2="553" y2="140" stroke="#424242" stroke-width="1.2"/><line x1="546" y1="132" x2="553" y2="132" stroke="#424242" stroke-width="1.2"/><line x1="546" y1="136" x2="553" y2="136" stroke="#424242" stroke-width="1.2"/><path d="M538.75 134 L544 134 M541.5 131.5 L544 134 L541.5 136.5" stroke="#1e7fd0" stroke-width="1.1" fill="none" /><text x="611" y="102" font-family="Liberation Sans" font-size="10" fill="#424242" font-weight="normal" text-anchor="start" textLength="12" lengthAdjust="spacingAndGlyphs">ab</text><text x="611" y="108.5" font-family="Liberation Sans" font-size="9.5" fill="#424242" font-weight="normal" text-anchor="start" >c</text><path d="M624.3 102 C625 105.5 622.5 106.6 618 106.6 M620.3 104.3 L618 106.6 L620.3 108.9" stroke="#1e7fd0" stroke-width="1.2" fill="none" /><rect x="609.8" y="126.8" width="14" height="14" rx="0" stroke="#424242" stroke-width="1" fill="none"/><line x1="616.8" y1="126.8" x2="616.8" y2="129.5" stroke="#424242" stroke-width="1"/><line x1="616.8" y1="137.5" x2="616.8" y2="140.8" stroke="#424242" stroke-width="1"/><rect x="609.8" y="129.8" width="14" height="7.6" rx="0" stroke="#1e7fd0" stroke-width="1.2" fill="#ffffff"/><path d="M611.5 133.6 L622 133.6 M613.8 131.3 L611.5 133.6 L613.8 135.9 M619.7 131.3 L622 133.6 L619.7 135.9" stroke="#1e7fd0" stroke-width="1.2" fill="none" /><path d="M731.4 133.0 L734.4 136.0 L737.4 133.0" stroke="#424242" stroke-width="1.1" fill="none"/><rect x="763.5" y="90.5" width="145" height="23" rx="3.5" stroke="#8a8a8a" stroke-width="1" fill="#fff"/><path d="M899.2 100.5 L902.2 103.5 L905.2 100.5" stroke="#424242" stroke-width="1.2" fill="none"/><text x="769.5" y="140.5" font-family="Liberation Sans" font-size="17" fill="#424242" font-weight="normal" text-anchor="start" >$</text><path d="M790.65 133.0 L793.4 136.0 L796.15 133.0" stroke="#424242" stroke-width="1.1" fill="none"/><text x="807.5" y="141" font-family="Liberation Sans" font-size="17.5" fill="#424242" font-weight="normal" text-anchor="start" textLength="16" lengthAdjust="spacingAndGlyphs">%</text><circle cx="842.3" cy="131.3" r="3.6" fill="#424242"/><path d="M845.6 131 C846 136 843.5 139.5 839.5 141.5" stroke="#424242" stroke-width="2" fill="none" /><line x1="856.4" y1="122.4" x2="856.4" y2="145.5" stroke="#d6d6d6" stroke-width="1"/><text x="872.5" y="133.5" font-family="Liberation Sans" font-size="10" fill="#424242" font-weight="normal" text-anchor="start" >.0</text><text x="867" y="141.8" font-family="Liberation Sans" font-size="10" fill="#424242" font-weight="normal" text-anchor="start" >.00</text><path d="M872 129.5 L863.5 129.5 M866.5 126.5 L863.5 129.5 L866.5 132.5" stroke="#1e7fd0" stroke-width="1.1" fill="none" /><text x="892" y="133.5" font-family="Liberation Sans" font-size="10" fill="#424242" font-weight="normal" text-anchor="start" >.00</text><text x="898" y="141.8" font-family="Liberation Sans" font-size="10" fill="#424242" font-weight="normal" text-anchor="start" >0</text><path d="M889 138 L897.5 138 M894.5 135 L897.5 138 L894.5 141" stroke="#1e7fd0" stroke-width="1.1" fill="none" /><rect x="948.5" y="90.5" width="27" height="21" rx="0" stroke="#444" stroke-width="1" fill="#fff"/><rect x="953" y="90.5" width="12.5" height="7" rx="0" stroke="#d9412e" stroke-width="1" fill="#f6a3ac"/><rect x="953" y="105" width="14.5" height="6.5" rx="0" stroke="#d9412e" stroke-width="1" fill="#f6a3ac"/><rect x="953" y="97.5" width="7.5" height="7.5" rx="0" stroke="#1e7fd0" stroke-width="1" fill="#8ab8e8"/><line x1="970.5" y1="90.5" x2="970.5" y2="111.5" stroke="#444" stroke-width="1"/><line x1="967.5" y1="90.5" x2="967.5" y2="111.5" stroke="#444" stroke-width="0.6"/><line x1="948.5" y1="97.5" x2="953" y2="97.5" stroke="#444" stroke-width="0.8"/><line x1="948.5" y1="105" x2="953" y2="105" stroke="#444" stroke-width="0.8"/><line x1="960.5" y1="97.5" x2="975.5" y2="97.5" stroke="#444" stroke-width="0.8"/><line x1="960.5" y1="105" x2="975.5" y2="105" stroke="#444" stroke-width="0.8"/><line x1="953" y1="90.5" x2="953" y2="111.5" stroke="#444" stroke-width="0.8"/><rect x="1016.5" y="90.5" width="27.5" height="21" rx="0" stroke="#444" stroke-width="1" fill="#fff"/><rect x="1025" y="97.5" width="19" height="14" rx="0" stroke="#1e7fd0" stroke-width="1" fill="#8ab8e8"/><line x1="1025" y1="90.5" x2="1025" y2="111.5" stroke="#444" stroke-width="1"/><line x1="1034.5" y1="90.5" x2="1034.5" y2="111.5" stroke="#444" stroke-width="1"/><line x1="1016.5" y1="97.5" x2="1044" y2="97.5" stroke="#444" stroke-width="1"/><line x1="1016.5" y1="104.5" x2="1044" y2="104.5" stroke="#444" stroke-width="1"/><path d="M1046 98 L1033 111" stroke="#444" stroke-width="3.2" fill="none" /><path d="M1046 98 L1033 111" stroke="#fff" stroke-width="1.4" fill="none" /><path d="M1024 117 C1027 117 1031 115 1033.5 111 L1031 108.5 C1027 110 1027 114 1024 117 Z" stroke="#1e7fd0" stroke-width="1" fill="#8ab8e8" /><rect x="1070.5" y="90.5" width="27" height="21" rx="0" stroke="#444" stroke-width="1" fill="#fff"/><line x1="1075" y1="90.5" x2="1075" y2="111.5" stroke="#444" stroke-width="1"/><line x1="1093.5" y1="90.5" x2="1093.5" y2="111.5" stroke="#444" stroke-width="1"/><line x1="1070.5" y1="95" x2="1097.5" y2="95" stroke="#444" stroke-width="1"/><line x1="1070.5" y1="106.5" x2="1097.5" y2="106.5" stroke="#444" stroke-width="1"/><rect x="1075" y="95" width="18.5" height="11.5" rx="0" stroke="#1e7fd0" stroke-width="1.2" fill="#8ab8e8"/><path d="M1100 98 L1087 111" stroke="#444" stroke-width="3.2" fill="none" /><path d="M1100 98 L1087 111" stroke="#fff" stroke-width="1.4" fill="none" /><path d="M1078 117 C1081 117 1085 115 1087.5 111 L1085 108.5 C1081 110 1081 114 1078 117 Z" stroke="#1e7fd0" stroke-width="1" fill="#8ab8e8" /><path d="M988.0 143.25 L990.5 145.75 L993.0 143.25" stroke="#424242" stroke-width="1.1" fill="none"/><path d="M1042.0 143.25 L1044.5 145.75 L1047.0 143.25" stroke="#424242" stroke-width="1.1" fill="none"/><path d="M1097.0 143.25 L1099.5 145.75 L1102.0 143.25" stroke="#424242" stroke-width="1.1" fill="none"/><rect x="1130.5" y="90.5" width="27.0" height="21.0" rx="0" stroke="#333" stroke-width="1.3" fill="#fafafa"/><line x1="1139.7" y1="90.5" x2="1139.7" y2="111.5" stroke="#333" stroke-width="1"/><line x1="1148.8" y1="90.5" x2="1148.8" y2="111.5" stroke="#333" stroke-width="1"/><line x1="1130.5" y1="97.4" x2="1157.5" y2="97.4" stroke="#333" stroke-width="1"/><line x1="1130.5" y1="104.8" x2="1157.5" y2="104.8" stroke="#333" stroke-width="1"/><rect x="1141" y="97.4" width="18.5" height="7.4" rx="0" stroke="#1e7fd0" stroke-width="1.3" fill="#8ab8e8"/><line x1="1150" y1="97.4" x2="1150" y2="104.8" stroke="#1e7fd0" stroke-width="1.2"/><path d="M1141 99.8 L1130 99.8 L1130 102.4 L1141 102.4" stroke="#ffffff" stroke-width="2.2" fill="none" /><path d="M1141 99.5 L1131 99.5 M1141 102.5 L1131 102.5" stroke="#1e7fd0" stroke-width="1.1" fill="none" /><path d="M1135 94.5 L1128.5 101 L1135 107.5" stroke="#1e7fd0" stroke-width="1.2" fill="none" /><path d="M1141.1 143.25 L1143.6 145.75 L1146.1 143.25" stroke="#424242" stroke-width="1.1" fill="none"/><rect x="1174.5" y="90.5" width="27.0" height="21.0" rx="0" stroke="#333" stroke-width="1.3" fill="#fafafa"/><line x1="1183.5" y1="90.5" x2="1183.5" y2="111.5" stroke="#333" stroke-width="1"/><line x1="1192.5" y1="90.5" x2="1192.5" y2="111.5" stroke="#333" stroke-width="1"/><line x1="1174.5" y1="97.4" x2="1201.5" y2="97.4" stroke="#333" stroke-width="1"/><line x1="1174.5" y1="104.8" x2="1201.5" y2="104.8" stroke="#333" stroke-width="1"/><rect x="1174.5" y="97.4" width="17" height="7.4" rx="0" stroke="none" stroke-width="0" fill="#ffffff"/><rect x="1178" y="97.4" width="14" height="7.4" rx="0" stroke="#1e7fd0" stroke-width="1.3" fill="#8ab8e8"/><line x1="1185" y1="97.4" x2="1185" y2="104.8" stroke="#1e7fd0" stroke-width="1.2"/><path d="M1192 96 L1203 107 M1203 96 L1192 107" stroke="#e8731d" stroke-width="1.3" fill="none" /><path d="M1185.0 143.25 L1187.5 145.75 L1190.0 143.25" stroke="#424242" stroke-width="1.1" fill="none"/><rect x="1218.5" y="90.5" width="27.0" height="21.0" rx="0" stroke="#333" stroke-width="1.3" fill="#fafafa"/><line x1="1226" y1="90.5" x2="1226" y2="111.5" stroke="#333" stroke-width="1"/><line x1="1238.6" y1="90.5" x2="1238.6" y2="111.5" stroke="#333" stroke-width="1"/><line x1="1218.5" y1="97.4" x2="1245.5" y2="97.4" stroke="#333" stroke-width="1"/><line x1="1218.5" y1="104.8" x2="1245.5" y2="104.8" stroke="#333" stroke-width="1"/><rect x="1226" y="97.4" width="12.6" height="7.4" rx="0" stroke="#1e7fd0" stroke-width="1.3" fill="#8ab8e8"/><path d="M1224 86.5 L1240 86.5 M1224 84.5 L1224 88.5 M1240 84.5 L1240 88.5" stroke="#1e7fd0" stroke-width="1.1" fill="none" /><path d="M1229.1 143.25 L1231.6 145.75 L1234.1 143.25" stroke="#424242" stroke-width="1.1" fill="none"/><path d="M1288 88 L1276.5 88 L1282.5 94 L1276.5 100.5 L1288 100.5" stroke="#424242" stroke-width="1.2" fill="none" /><path d="M1361.0 93.5 L1364 96.5 L1367.0 93.5" stroke="#424242" stroke-width="1.1" fill="none"/><rect x="1274.5" y="113.5" width="15.5" height="13.5" rx="0" stroke="#424242" stroke-width="1.2" fill="#fff"/><line x1="1274.5" y1="116.5" x2="1290" y2="116.5" stroke="#424242" stroke-width="1"/><path d="M1282 118 L1282 124 M1279.5 121.5 L1282 124 L1284.5 121.5" stroke="#1e7fd0" stroke-width="1.2" fill="none" /><path d="M1312.9 119.25 L1315.4 121.75 L1317.9 119.25" stroke="#424242" stroke-width="1.1" fill="none"/><path d="M1275 147 L1283 139.5 L1289 145.5 L1281 153 Z" stroke="#9b2fb0" stroke-width="1.4" fill="#fafafa" /><path d="M1275.5 147 L1278.5 144 L1284 149.5 L1281 152.5 Z" stroke="none" stroke-width="0" fill="#bdbdbd" /><path d="M1325.4 145.75 L1327.9 148.25 L1330.4 145.75" stroke="#424242" stroke-width="1.1" fill="none"/><text x="1385.5" y="99.3" font-family="Liberation Sans" font-size="14.5" fill="#1e7fd0" font-weight="normal" text-anchor="start" >A</text><text x="1386" y="113.4" font-family="Liberation Sans" font-size="14.5" fill="#424242" font-weight="normal" text-anchor="start" >Z</text><path d="M1398.5 94.5 L1414 94.5 L1414 97 L1408.5 102.5 L1408.5 109.2 L1404 109.2 L1404 102.5 L1398.5 97 Z" stroke="#424242" stroke-width="1.1" fill="#fff" /><path d="M1411.2 143.25 L1413.7 145.75 L1416.2 143.25" stroke="#424242" stroke-width="1.1" fill="none"/><circle cx="1449.6" cy="97.4" r="10.2" stroke="#333" stroke-width="1.2" fill="#fafafa"/><line x1="1442" y1="105.5" x2="1431.5" y2="115.8" stroke="#333" stroke-width="1.2"/><path d="M1460.5 143.25 L1463 145.75 L1465.5 143.25" stroke="#424242" stroke-width="1.1" fill="none"/><rect x="1496.5" y="88.5" width="11.5" height="11.5" rx="0" stroke="#d24726" stroke-width="1.6" fill="none"/><rect x="1511" y="88.5" width="11.5" height="11.5" rx="0" stroke="#d24726" stroke-width="1.6" fill="none"/><rect x="1496.5" y="103" width="11.5" height="11.5" rx="0" stroke="#d24726" stroke-width="1.6" fill="none"/><rect x="1511" y="103" width="11.5" height="11.5" rx="0" stroke="#d24726" stroke-width="1.6" fill="none"/><rect x="1495.5" y="87.5" width="27.5" height="27.5" rx="0" stroke="#d24726" stroke-width="1.4" fill="none"/><path d="M1572.4 161.5 L1577.4 166.5 L1582.4 161.5" stroke="#424242" stroke-width="1.2" fill="none"/><path d="M93.0 197.75 L98 203.25 L103.0 197.75" stroke="#333" stroke-width="1.3" fill="none"/><circle cx="120" cy="194.5" r="1.2" fill="#333"/><circle cx="120" cy="199" r="1.2" fill="#333"/><circle cx="120" cy="203.5" r="1.2" fill="#333"/><path d="M137.5 194 L149 205 M149 194 L137.5 205" stroke="#b0b0b0" stroke-width="1.2" fill="none" /><path d="M159 200 L163.5 204.5 L175 193.5" stroke="#b0b0b0" stroke-width="1.2" fill="none" /><text x="184" y="203.5" font-family="Liberation Serif" font-style="italic" font-size="17" fill="#222">f</text><text x="190.5" y="204" font-family="Liberation Serif" font-style="italic" font-size="14" fill="#222">x</text><path d="M204.2 196.75 L208.7 202.25 L213.2 196.75" stroke="#666" stroke-width="1.1" fill="none"/><path d="M1577.5 194.75 L1582.5 200.25 L1587.5 194.75" stroke="#333" stroke-width="1.3" fill="none"/><path d="M35 826.5 L30 831.5 L35 836.5" stroke="#9a9a9a" stroke-width="1.2" fill="none" /><path d="M62 826.5 L67 831.5 L62 836.5" stroke="#9a9a9a" stroke-width="1.2" fill="none" /><path d="M293.4 826 L293.4 837.5 M287.7 831.7 L299 831.7" stroke="#333" stroke-width="1.2" fill="none" /><circle cx="963" cy="828" r="1.2" fill="#333"/><circle cx="963" cy="832.5" r="1.2" fill="#333"/><circle cx="963" cy="837" r="1.2" fill="#333"/><path d="M991 827 L984 831.5 L991 836 Z" stroke="#6e6e6e" stroke-width="1" fill="#6e6e6e" /><path d="M1569 827 L1576 831.5 L1569 836 Z" stroke="#6e6e6e" stroke-width="1" fill="#6e6e6e" /><path d="M1585.5 230.5 L1589.5 224.5 L1593.5 230.5 Z" stroke="#6e6e6e" stroke-width="1" fill="#6e6e6e" /><path d="M1585.5 808 L1589.5 814 L1593.5 808 Z" stroke="#6e6e6e" stroke-width="1" fill="#6e6e6e" /><circle cx="67.8" cy="854.4" r="1.8" stroke="#222" stroke-width="1.1" fill="none"/><path d="M65.8 856.3 C64 855 62 854.8 62.3 856.5 C62.6 857.6 64.5 857.8 65.6 858 C65.6 860.5 64.3 862.5 64.6 864.5 C65 866.2 66.8 865.8 67.2 864 L67.8 861.8 M69.8 856.3 C71.5 855 73.6 854.8 73.3 856.5 C73.1 857.3 72 857.8 70.8 857.8" stroke="#222" stroke-width="1.1" fill="none" /><path d="M69.6 859.2 L75.6 865.6 M75.6 859.2 L69.6 865.6" stroke="#222" stroke-width="1.1" fill="none" /><rect x="1312.5" y="852.5" width="13.5" height="12" rx="0" stroke="#333" stroke-width="1" fill="none"/><line x1="1317" y1="852.5" x2="1317" y2="864.5" stroke="#333" stroke-width="0.8"/><line x1="1321.5" y1="852.5" x2="1321.5" y2="864.5" stroke="#333" stroke-width="0.8"/><line x1="1312.5" y1="856.5" x2="1326" y2="856.5" stroke="#333" stroke-width="0.8"/><line x1="1312.5" y1="860.5" x2="1326" y2="860.5" stroke="#333" stroke-width="0.8"/><rect x="1353" y="852.5" width="14" height="12" rx="0" stroke="#333" stroke-width="1" fill="none"/><rect x="1356" y="855" width="8" height="7" rx="0" stroke="#333" stroke-width="0.9" fill="none"/><line x1="1357.5" y1="857.5" x2="1362.5" y2="857.5" stroke="#333" stroke-width="0.7"/><line x1="1357.5" y1="859.5" x2="1362.5" y2="859.5" stroke="#333" stroke-width="0.7"/><rect x="1393" y="852.5" width="14" height="12" rx="0" stroke="#333" stroke-width="1" fill="none"/><path d="M1397.5 852.5 L1397.5 857.5 L1402.5 857.5 L1402.5 852.5" stroke="#333" stroke-width="1" fill="none" /><line x1="1426" y1="858.8" x2="1434" y2="858.8" stroke="#444" stroke-width="1.1"/><line x1="1439" y1="858.8" x2="1539" y2="858.8" stroke="#888" stroke-width="1"/><rect x="1491.5" y="854" width="5" height="10" rx="0" stroke="none" stroke-width="0" fill="#555"/><path d="M1547.2 854.8 L1547.2 862.8 M1543.2 858.8 L1551.2 858.8" stroke="#444" stroke-width="1.1" fill="none" /><rect x="10" y="877" width="7.5" height="7.5" rx="0" stroke="none" stroke-width="0" fill="#ffffff"/><rect x="18.5" y="877" width="7.5" height="7.5" rx="0" stroke="none" stroke-width="0" fill="#ffffff"/><rect x="10" y="885.5" width="7.5" height="7.5" rx="0" stroke="none" stroke-width="0" fill="#ffffff"/><rect x="18.5" y="885.5" width="7.5" height="7.5" rx="0" stroke="none" stroke-width="0" fill="#ffffff"/><circle cx="57.5" cy="884.5" r="5" stroke="#222" stroke-width="1.5" fill="none"/><line x1="53.8" y1="888.3" x2="48.5" y2="893.5" stroke="#222" stroke-width="1.7"/><path d="M304 879.3 L304 877.6 L314.6 877.6 L314.6 879.3" stroke="#fff" stroke-width="1.3" fill="none" /><rect x="304.2" y="881.2" width="10.3" height="7.4" rx="0" stroke="#fff" stroke-width="1.3" fill="none"/><path d="M304 890.4 L304 892.1 L314.6 892.1 L314.6 890.4" stroke="#fff" stroke-width="1.3" fill="none" /><rect x="317.6" y="877.3" width="2.4" height="1.8" rx="0" stroke="none" stroke-width="0" fill="#fff"/><rect x="317.4" y="880.6" width="2.8" height="3.2" rx="0" stroke="none" stroke-width="0" fill="#fff"/><line x1="318.8" y1="884" x2="318.8" y2="892.3" stroke="#fff" stroke-width="1.1"/><circle cx="351" cy="885" r="8.3" fill="#1f86d9"/><path d="M351 877 C356 877 359.3 880.5 359.3 884.5 C359.3 888 356.5 889.3 354 889.3 C351.5 889.3 350 887.5 350.5 885.5 C351.5 882.5 356 882 358 884 C357.5 880 354.5 877.8 351 877 Z" fill="#5bc35d"/><path d="M343 886 C343.5 891 347 893.3 351.5 893.3 C355 893.3 357.5 891.5 358.5 889.5 C355 891.5 349.5 891 347.5 887 C346.5 884.5 348 881.5 351 880.5 C346.5 880.5 343.3 883 343 886 Z" fill="#0d5fb8"/><path d="M383.6 880.5 L383.6 878 L391.4 878 L391.4 880.5" stroke="#1a9ae0" stroke-width="1.3" fill="none" /><rect x="379.8" y="880" width="15.2" height="13" rx="2.2" stroke="none" stroke-width="0" fill="#f7f7f7"/><rect x="383.6" y="882.6" width="3.2" height="3.2" rx="0" stroke="none" stroke-width="0" fill="#f25022"/><rect x="388" y="882.6" width="3.2" height="3.2" rx="0" stroke="none" stroke-width="0" fill="#7fba00"/><rect x="383.6" y="887" width="3.2" height="3.2" rx="0" stroke="none" stroke-width="0" fill="#00a4ef"/><rect x="388" y="887" width="3.2" height="3.2" rx="0" stroke="none" stroke-width="0" fill="#ffb900"/><path d="M417.5 890.5 L432.5 890.5" stroke="#b0602a" stroke-width="1.1" fill="none" /><path d="M419 890.5 L427.5 881 M431 890.5 L422.5 881" stroke="#b0602a" stroke-width="1.1" fill="none" /><path d="M424.5 891 L426 884 L427.5 891 Z M425 880 L428 882 L425.5 883" stroke="#2a4fa8" stroke-width="1.2" fill="#2a4fa8" /><circle cx="462" cy="885" r="8.2" fill="#f08a1c"/><path d="M456 879.5 C459 876.5 465.5 876.3 468.6 880.5 C466 879 461 879.5 458.5 882 Z" fill="#8a63d2"/><path d="M468.6 880.5 C471 884 470.5 889.5 466 892 C468.5 889 468.5 884.5 466.5 882 Z" fill="#f3c63a"/><path d="M458.8 881.3 L462.5 880 L466.2 881.3 L466.2 885.5 C466.2 888 464.5 889.5 462.5 890.3 C460.5 889.5 458.8 888 458.8 885.5 Z" fill="#ffffff"/><circle cx="462.5" cy="884.2" r="1.2" fill="#333"/><rect x="462" y="884.5" width="1" height="2.5" rx="0" stroke="none" stroke-width="0" fill="#333"/><path d="M493 879 L496 877 L501.5 877 L504.5 879 L505.5 882 L503 890 L499 893 L495 890 L492.5 882 Z" stroke="none" stroke-width="0" fill="#f05a24" /><path d="M496 882 L499 884 L502 882 L500.5 887 L499 888 L497.5 887 Z" stroke="none" stroke-width="0" fill="#ffffff" /><circle cx="539" cy="879.5" r="2.6" fill="#7b83eb"/><rect x="535" y="882.5" width="8" height="9" rx="1.5" stroke="none" stroke-width="0" fill="#7b83eb"/><circle cx="532.5" cy="880" r="3.3" fill="#5059c9"/><rect x="528" y="883.5" width="9" height="8" rx="1" stroke="none" stroke-width="0" fill="#4b53bc"/><text x="530.2" y="890.5" font-family="Liberation Sans" font-size="7" fill="#fff" font-weight="bold" text-anchor="start" >T</text><rect x="565" y="879.5" width="16.3" height="13.5" rx="1" stroke="none" stroke-width="0" fill="#f8d775"/><rect x="565" y="878" width="7" height="3" rx="0.5" stroke="none" stroke-width="0" fill="#e8b84a"/><path d="M569.5 893 L569.5 884.5 L579.5 884.5 L579.5 893 L577 893 L577 888 L572 888 L572 893 Z" fill="#2a86d8"/><ellipse cx="610" cy="885" rx="3.6" ry="7.6" stroke="#f0f0f0" stroke-width="1.4" fill="none" transform="rotate(0 610 885)"/><ellipse cx="610" cy="885" rx="3.6" ry="7.6" stroke="#f0f0f0" stroke-width="1.4" fill="none" transform="rotate(60 610 885)"/><ellipse cx="610" cy="885" rx="3.6" ry="7.6" stroke="#f0f0f0" stroke-width="1.4" fill="none" transform="rotate(120 610 885)"/><rect x="639" y="877" width="16" height="7" rx="1" stroke="none" stroke-width="0" fill="#6fd46b"/><rect x="647" y="877" width="8" height="6" rx="0" stroke="none" stroke-width="0" fill="#b4e56e"/><rect x="640" y="883" width="15" height="10" rx="1" stroke="none" stroke-width="0" fill="#17683a"/><rect x="638.3" y="882" width="9" height="9" rx="1" stroke="none" stroke-width="0" fill="#0e5c2f"/><text x="639.8" y="890" font-family="Liberation Sans" font-size="8.5" fill="#ffffff" font-weight="bold" text-anchor="start" >x</text><path d="M1176 880 C1176 875 1181 873 1184 874 C1180 876 1181 882 1186 882 C1184 885 1177 884 1176 880 Z" fill="#f5b82e"/><path d="M1172 895 C1169 895 1169 889 1173 889 C1173 884 1180 883 1182 887 C1184 884 1190 885 1190 889 C1194 889 1195 895 1191 895 Z" fill="#c8dff5" stroke="#9ec3e8" stroke-width="0.8"/><text x="1241.4" y="890.4" font-family="Liberation Sans" font-size="13" fill="#ffffff" font-weight="normal" text-anchor="start" textLength="52" lengthAdjust="spacingAndGlyphs">غائم غالبًا</text><path d="M1311.7 888 L1318 882 L1324.4 888" stroke="#fff" stroke-width="1.3" fill="none" /><circle cx="1342.2" cy="885.2" r="8" fill="#e9c21f"/><circle cx="1342.2" cy="885.2" r="5.5" fill="#3aa845"/><path d="M1342.2 882 L1342.2 888.5 M1339 885.2 L1345.5 885.2" stroke="#e9c21f" stroke-width="1.6" fill="none" /><rect x="1362" y="880" width="8" height="10" rx="2.5" stroke="#fff" stroke-width="1.1" fill="none"/><rect x="1370" y="882" width="2.5" height="6" rx="0" stroke="#fff" stroke-width="1" fill="none"/><line x1="1363" y1="877.5" x2="1369" y2="877.5" stroke="#fff" stroke-width="1"/><line x1="1363" y1="892.5" x2="1369" y2="892.5" stroke="#fff" stroke-width="1"/><rect x="1386" y="877" width="6.5" height="11" rx="3.2" stroke="#fff" stroke-width="0" fill="#fff"/><path d="M1384 884 C1384 891 1395 891 1395 884 M1389.3 890 L1389.3 894 M1386 894 L1392.5 894" stroke="#fff" stroke-width="1.2" fill="none" /><path d="M1407 880.5 L1407 884 M1410 880.5 L1410 884 M1405.5 884 L1411.5 884 L1411.5 886 L1408.5 889 L1408.5 891" stroke="#fff" stroke-width="1.1" fill="none" /><rect x="1412.5" y="882.5" width="9" height="8" rx="0" stroke="#fff" stroke-width="1.1" fill="none"/><rect x="1413.5" y="884" width="4" height="5" rx="0" stroke="none" stroke-width="0" fill="#fff"/><path d="M1440.5 892.5 A4 4 0 0 1 1444.5 888.5" stroke="#fff" stroke-width="1.3" fill="none" /><path d="M1437.0 892.5 A7.5 7.5 0 0 1 1444.5 885.0" stroke="#bbbbbb" stroke-width="1.3" fill="none" /><path d="M1433.5 892.5 A11 11 0 0 1 1444.5 881.5" stroke="#bbbbbb" stroke-width="1.3" fill="none" /><text x="1464.4" y="891" font-family="Liberation Sans" font-size="12" fill="#fff" font-weight="normal" text-anchor="start" >ع</text><rect x="1560" y="878.5" width="15" height="11" rx="0" stroke="none" stroke-width="0" fill="#ffffff"/><path d="M1563 889 L1563 893 L1567 889 Z" stroke="none" stroke-width="0" fill="#fff" /><line x1="1562.5" y1="881.5" x2="1572.5" y2="881.5" stroke="#1c1c1c" stroke-width="1.1"/><line x1="1562.5" y1="884" x2="1572.5" y2="884" stroke="#1c1c1c" stroke-width="1.1"/><line x1="1562.5" y1="886.5" x2="1568" y2="886.5" stroke="#1c1c1c" stroke-width="1.1"/></svg>
<div class="t" style="left:1295.20px;top:786.09px;font-size:21.16px;color:rgba(150,150,150,0.6);transform:scaleX(0.9392);z-index:20;">Activate Windows</div>
<div class="t" style="left:1295.20px;top:810.75px;font-size:15.65px;color:rgba(150,150,150,0.6);transform:scaleX(0.9555);z-index:20;">Go to Settings to activate Windows.</div>
<svg style="position:absolute;left:0;top:0;z-index:20" width="1600" height="900" viewBox="0 0 1600 900"><g opacity="0.5"><circle cx="878" cy="831.5" r="13.3" stroke="rgb(186,186,186)" stroke-width="8.8" fill="none"/><circle cx="766" cy="830.5" r="11" stroke="rgb(186,186,186)" stroke-width="8.5" fill="none"/><path d="M736.5 798 L736.5 845.5 L878 845.5 M802.5 820 L802.5 845.5 M820.5 820 L820.5 845.5 M841 820 L841 845.5 M722 817 C706 819 704 845.5 722 845.5 L737 845.5" stroke="rgb(186,186,186)" stroke-width="8.5" fill="none" stroke-linecap="round" stroke-linejoin="round"/><circle cx="761.7" cy="799.5" r="5.2" fill="rgb(186,186,186)"/><circle cx="774.5" cy="799.5" r="5.2" fill="rgb(186,186,186)"/><circle cx="795.4" cy="811.5" r="5.2" fill="rgb(186,186,186)"/><circle cx="808.2" cy="811.5" r="5.2" fill="rgb(186,186,186)"/></g></svg>
<div class="t" style="left:704.00px;top:848.11px;font-size:32.00px;color:rgba(186,186,186,0.5);transform:scaleX(0.9674); font-weight:bold;z-index:20;">mostaql.com</div>
<div class="t" style="left:27.00px;top:122.21px;font-size:13.04px;color:#1f1f1f;transform:scaleX(0.8385);">Paste</div>
<div class="t" style="left:88.00px;top:88.46px;font-size:13.04px;color:#1f1f1f;transform:scaleX(0.9338);">Cut</div>
<div class="t" style="left:88.00px;top:114.46px;font-size:13.04px;color:#1f1f1f;transform:scaleX(0.9131);">Copy</div>
<div class="t" style="left:88.00px;top:140.21px;font-size:13.04px;color:#1f1f1f;transform:scaleX(0.9018);">Format Painter</div>
<div class="t" style="left:64.50px;top:161.77px;font-size:12.68px;color:#1f1f1f;transform:scaleX(0.9212);">Clipboard</div>
<div class="t" style="left:194.30px;top:94.98px;font-size:12.90px;color:#1f1f1f;transform:scaleX(0.9285);">Aptos Narrow</div>
<div class="t" style="left:319.40px;top:94.98px;font-size:12.90px;color:#1f1f1f;transform:scaleX(0.7902);">11</div>
<div class="t" style="left:281.60px;top:161.89px;font-size:12.17px;color:#1f1f1f;transform:scaleX(0.9529);">Font</div>
<div class="t" style="left:629.50px;top:95.85px;font-size:13.77px;color:#1f1f1f;transform:scaleX(0.8287);">Wrap Text</div>
<div class="t" style="left:629.50px;top:127.85px;font-size:13.77px;color:#1f1f1f;transform:scaleX(0.8667);">Merge &amp; Center</div>
<div class="t" style="left:552.00px;top:161.77px;font-size:12.68px;color:#1f1f1f;transform:scaleX(0.9303);">Alignment</div>
<div class="t" style="left:766.60px;top:94.91px;font-size:13.33px;color:#1f1f1f;transform:scaleX(0.8195);">General</div>
<div class="t" style="left:807.40px;top:161.79px;font-size:12.17px;color:#1f1f1f;transform:scaleX(0.9276);">Number</div>
<div class="t" style="left:931.00px;top:121.60px;font-size:12.75px;color:#1f1f1f;transform:scaleX(0.9629);">Conditional</div>
<div class="t" style="left:927.00px;top:137.70px;font-size:12.75px;color:#1f1f1f;transform:scaleX(0.9580);">Formatting</div>
<div class="t" style="left:1004.40px;top:121.60px;font-size:12.75px;color:#1f1f1f;transform:scaleX(0.8939);">Format as</div>
<div class="t" style="left:1011.30px;top:137.70px;font-size:12.75px;color:#1f1f1f;transform:scaleX(0.8760);">Table</div>
<div class="t" style="left:1074.50px;top:121.60px;font-size:12.75px;color:#1f1f1f;transform:scaleX(0.8616);">Cell</div>
<div class="t" style="left:1063.00px;top:137.70px;font-size:12.75px;color:#1f1f1f;transform:scaleX(0.8562);">Styles</div>
<div class="t" style="left:1001.60px;top:161.79px;font-size:12.17px;color:#1f1f1f;transform:scaleX(0.8395);">Styles</div>
<div class="t" style="left:1129.00px;top:121.79px;font-size:13.48px;color:#1f1f1f;transform:scaleX(0.8606);">Insert</div>
<div class="t" style="left:1171.25px;top:121.79px;font-size:13.48px;color:#1f1f1f;transform:scaleX(0.8408);">Delete</div>
<div class="t" style="left:1213.20px;top:121.79px;font-size:13.48px;color:#1f1f1f;transform:scaleX(0.8824);">Format</div>
<div class="t" style="left:1176.50px;top:161.85px;font-size:12.46px;color:#1f1f1f;transform:scaleX(0.8385);">Cells</div>
<div class="t" style="left:1294.40px;top:88.21px;font-size:13.33px;color:#1f1f1f;transform:scaleX(0.8942);">AutoSum</div>
<div class="t" style="left:1294.40px;top:114.21px;font-size:13.33px;color:#1f1f1f;transform:scaleX(0.8555);">Fill</div>
<div class="t" style="left:1294.40px;top:140.31px;font-size:13.33px;color:#1f1f1f;transform:scaleX(0.8441);">Clear</div>
<div class="t" style="left:1382.60px;top:121.31px;font-size:13.33px;color:#1f1f1f;transform:scaleX(0.9092);">Sort &amp;</div>
<div class="t" style="left:1381.00px;top:137.21px;font-size:13.33px;color:#1f1f1f;transform:scaleX(0.8784);">Filter</div>
<div class="t" style="left:1428.00px;top:121.31px;font-size:13.33px;color:#1f1f1f;transform:scaleX(0.9278);">Find &amp;</div>
<div class="t" style="left:1425.50px;top:137.21px;font-size:13.33px;color:#1f1f1f;transform:scaleX(0.8228);">Select</div>
<div class="t" style="left:1351.30px;top:161.85px;font-size:12.46px;color:#1f1f1f;transform:scaleX(0.9413);">Editing</div>
<div class="t" style="left:1488.25px;top:121.31px;font-size:13.33px;color:#1f1f1f;transform:scaleX(0.9148);">Add-ins</div>
<div class="t" style="left:1489.20px;top:161.85px;font-size:12.46px;color:#1f1f1f;transform:scaleX(0.9420);">Add-ins</div>
<div style="position:absolute;left:0px;top:0px;width:1600px;height:3px;background:#ff0000;z-index:50"></div>
<div style="position:absolute;left:0px;top:897px;width:1600px;height:3px;background:#ff0000;z-index:50"></div>
<div style="position:absolute;left:0px;top:0px;width:3px;height:900px;background:#ff0000;z-index:50"></div>
<div style="position:absolute;left:1597px;top:0px;width:3px;height:900px;background:#ff0000;z-index:50"></div>
</body></html>
